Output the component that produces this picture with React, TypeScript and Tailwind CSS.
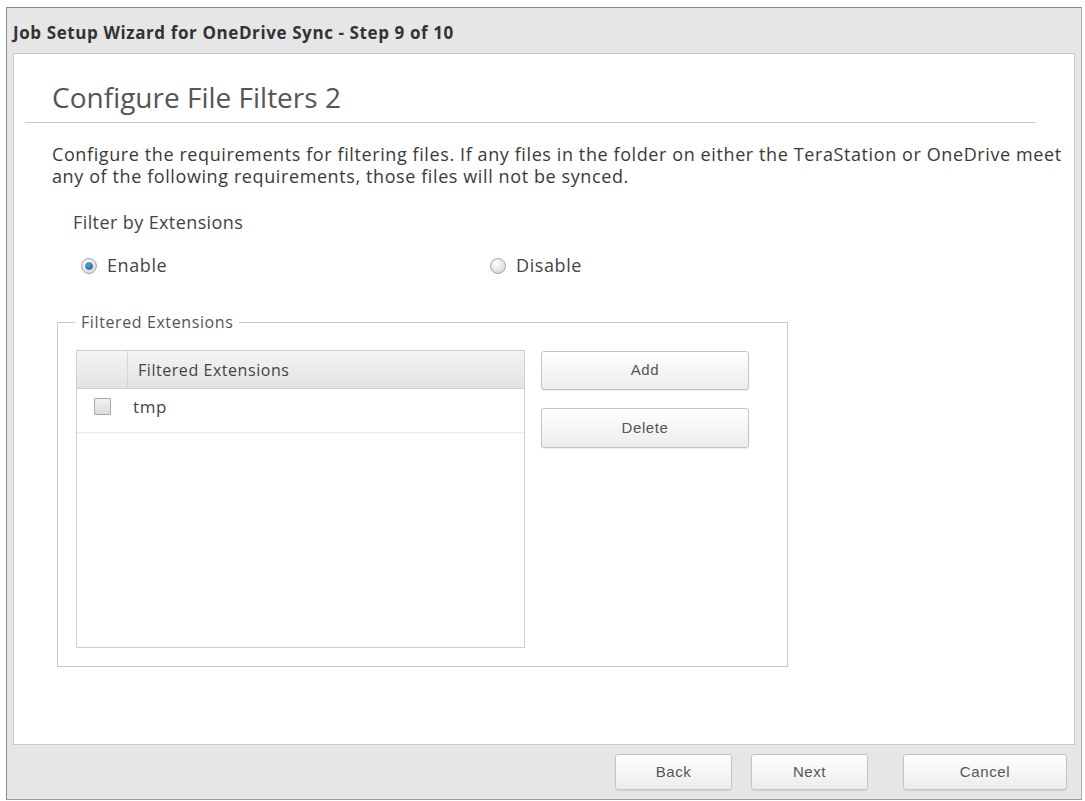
import React from "react";

const font = { fontFamily: '"Open Sans", "Noto Sans", sans-serif' };

function Btn({ label, className }: { label: string; className: string }) {
  return (
    <div
      className={`flex items-center justify-center rounded-[3px] border border-[#c4c4c4] bg-gradient-to-b from-[#ffffff] to-[#ececec] text-[15px] tracking-[0.6px] text-[#555] shadow-[0_1px_1px_rgba(0,0,0,0.08)] ${className}`}
      style={{ fontFamily: '"Liberation Sans", Arial, sans-serif' }}
    >
      {label}
    </div>
  );
}

function Radio({ checked }: { checked: boolean }) {
  return (
    <svg width="18" height="18" viewBox="0 0 18 18">
      <defs>
        <radialGradient id={checked ? "rg1" : "rg2"} cx="40%" cy="35%" r="70%">
          <stop offset="0%" stopColor="#ffffff" />
          <stop offset="100%" stopColor="#d6d6d6" />
        </radialGradient>
        <radialGradient id="dot" cx="40%" cy="35%" r="70%">
          <stop offset="0%" stopColor="#5aa7e0" />
          <stop offset="100%" stopColor="#1c5f99" />
        </radialGradient>
      </defs>
      <circle cx="9" cy="9" r="7.5" fill={`url(#${checked ? "rg1" : "rg2"})`} stroke="#a9a9a9" strokeWidth="1" />
      {checked && <circle cx="9" cy="9" r="3.8" fill="url(#dot)" />}
    </svg>
  );
}

export default function App() {
  return (
    <div className="w-[1085px] h-[801px] bg-white relative overflow-hidden" style={font}>
      <div className="ml-[6px] mt-[7px] w-[1076px] h-[793px] border-l border-t border-[#8a8a8a] border-r border-r-[#b0b0b0] border-b border-b-[#9a9a9a] bg-[#e6e6e6] flex flex-col">
        {/* title bar */}
        <div className="h-[45px] flex items-center pl-[6px] pt-[5px] text-[17px] font-bold text-[#333] tracking-[0.6px] whitespace-nowrap">
          Job Setup Wizard for OneDrive Sync - Step 9 of 10
        </div>
        {/* content */}
        <div className="mx-[6px] h-[692px] bg-white border border-[#c8c8c8] relative">
          <div className="pl-[38px] pt-[25px] text-[28px] leading-[36px] text-[#555]">Configure File Filters 2</div>
          <div className="ml-[11px] mr-[38px] mt-[7px] h-px bg-[#c9c9c9]" />
          <div className="pl-[38px] pt-[20px] text-[18px] leading-[22px] tracking-[0.6px] text-[#3a3a3a] whitespace-nowrap">
            <div>Configure the requirements for filtering files. If any files in the folder on either the TeraStation or OneDrive meet</div>
            <div>any of the following requirements, those files will not be synced.</div>
          </div>
          <div className="pl-[59px] pt-[24px] text-[18px] leading-[22px] tracking-[0.4px] text-[#444]">Filter by Extensions</div>
          <div className="flex items-center pl-[66px] pt-[19px] text-[18px] tracking-[0.6px] text-[#444]">
            <div className="flex items-center w-[409px]">
              <Radio checked />
              <span className="ml-[9px]">Enable</span>
            </div>
            <div className="flex items-center">
              <Radio checked={false} />
              <span className="ml-[9px]">Disable</span>
            </div>
          </div>
          {/* fieldset */}
          <div className="relative ml-[43px] mt-[43px] w-[731px] h-[345px] border border-[#c9c9c9]">
            <div className="absolute left-[17px] top-[-12px] bg-white px-[6px] text-[16px] leading-[22px] tracking-[0.6px] text-[#555]">
              Filtered Extensions
            </div>
            <div className="flex pl-[18px] pt-[27px]">
              <div className="w-[449px] h-[298px] border border-[#cfcfcf]">
                <div className="flex h-[38px] bg-gradient-to-b from-[#f4f4f4] to-[#e3e3e3] border-b border-[#d0d0d0]">
                  <div className="w-[51px] border-r border-[#d6d6d6]" />
                  <div className="flex items-center pl-[10px] text-[16px] tracking-[0.55px] text-[#444]">Filtered Extensions</div>
                </div>
                <div className="flex h-[44px] border-b border-[#ececec] items-start pt-[9px]">
                  <div className="w-[51px] flex justify-center">
                    <div className="w-[17px] h-[17px] border border-[#a8a8a8] bg-gradient-to-b from-[#f2f2f2] to-[#dcdcdc] rounded-[1px]" />
                  </div>
                  <div className="pl-[5px] text-[17px] leading-[18px] tracking-[0.6px] text-[#444]">tmp</div>
                </div>
              </div>
              <div className="ml-[16px] flex flex-col gap-[18px] pt-[1px]">
                <Btn label="Add" className="w-[208px] h-[39px]" />
                <Btn label="Delete" className="w-[208px] h-[40px]" />
              </div>
            </div>
          </div>
        </div>
        {/* footer */}
        <div className="flex-1 flex items-start pt-[9px] pl-[608px]">
          <Btn label="Back" className="w-[117px] h-[36px]" />
          <Btn label="Next" className="ml-[19px] w-[117px] h-[36px]" />
          <Btn label="Cancel" className="ml-[35px] w-[164px] h-[36px]" />
        </div>
      </div>
    </div>
  );
}
